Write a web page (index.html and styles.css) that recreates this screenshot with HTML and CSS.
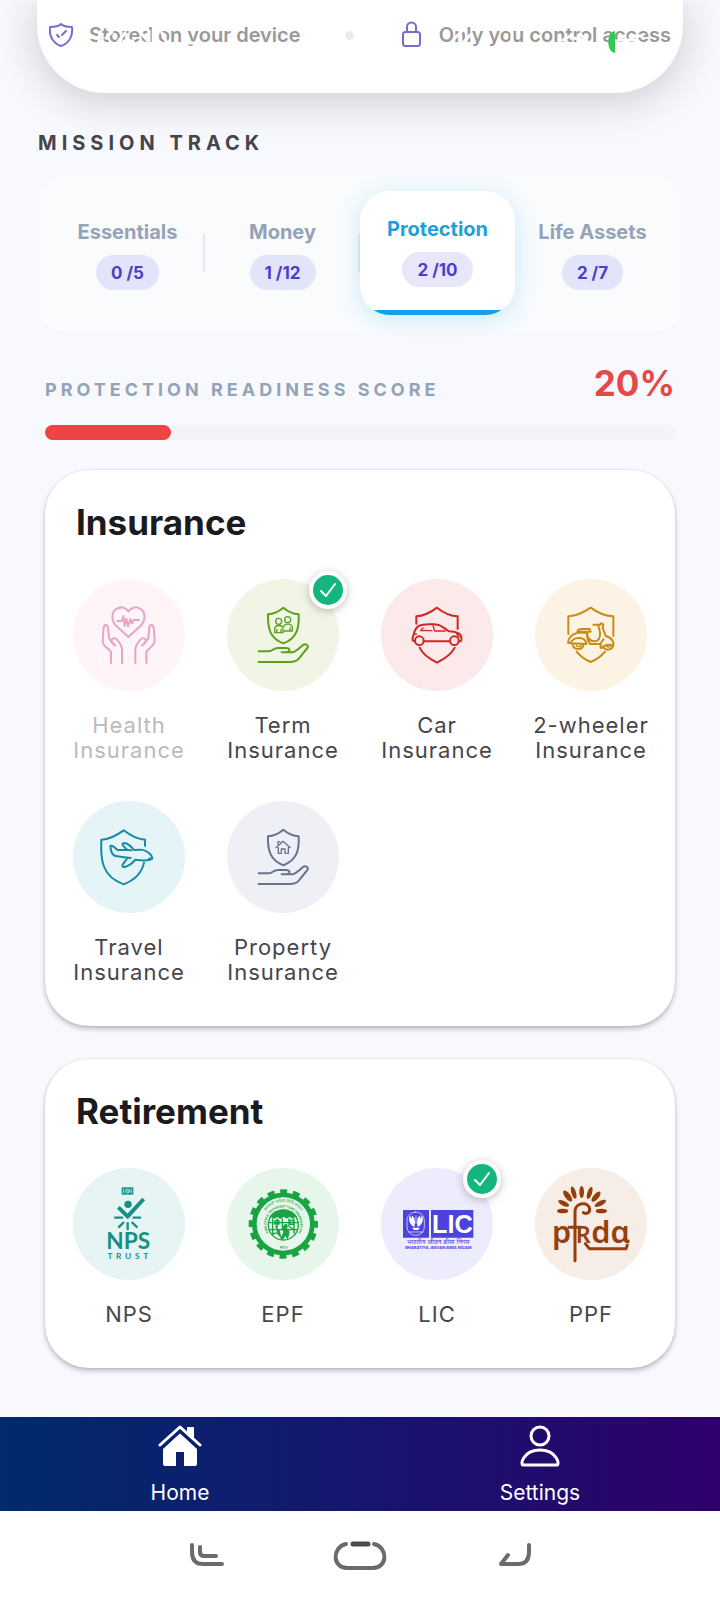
FILE: index.html
```html
<!DOCTYPE html>
<html lang="en">
<head>
    <meta charset="UTF-8">
    <meta name="viewport" content="width=device-width, initial-scale=1.0">
    <title>Mission Track</title>
    <link rel="stylesheet" href="styles.css">
</head>
<body>
    <header class="trust-card">
        <div class="trust-item">
            <svg class="trust-icon" viewBox="0 0 26 28" aria-hidden="true">
                <path d="M12 3 C9 6 5 6 1 6 C0 14 3 22 12 25 C21 22 24 14 23 6 C19 6 15 6 12 3 Z"/>
                <path d="M8 14 l2 2 M13 14 l4 -4"/>
            </svg>
            <span>Stored on your device</span>
        </div>
        <span class="trust-dot"></span>
        <div class="trust-item">
            <svg class="trust-icon" viewBox="0 0 26 28" aria-hidden="true">
                <rect x="4" y="11" width="17" height="14" rx="2.5"/>
                <path d="M8 11 V6 a4.5 4.5 0 0 1 9 0 V11"/>
            </svg>
            <span>Only you control access</span>
        </div>
        <!-- status bar glyphs, white over the card -->
        <svg class="status-bar" viewBox="0 0 720 60" aria-hidden="true">
            <path class="status-white" d="M88 37 l9 1 M100 32 l-1 9 M106 38 l6 -6 M117 43 l8 -10 M124 41 l9 0 M141 33 l6 7 M149 31 v12 M162 33 l4 8 M190 43 l8 0 M455 38 l7 -7 M463 43 l7 -8 M512 33 v10 M563 40 l9 -5 M574 38 l11 3 M580 34 l7 7 M618 40 h18 M630 36 h12"/>
            <path class="status-green" d="M615 31 V53 C606 52 606 32 615 31 Z"/>
        </svg>
    </header>

    <main class="content">
        <h2 class="section-label">MISSION TRACK</h2>

        <div class="tabs" role="tablist">
            <button class="tab" role="tab">Essentials<span class="pill">0 /5</span></button>
            <button class="tab" role="tab">Money<span class="pill">1 /12</span></button>
            <button class="tab active" role="tab" aria-selected="true">Protection<span class="pill">2 /10</span></button>
            <button class="tab" role="tab">Life Assets<span class="pill">2 /7</span></button>
        </div>

        <div class="score">
            <div class="score-head">
                <span class="score-label">PROTECTION READINESS SCORE</span>
                <span class="score-value">20%</span>
            </div>
            <div class="bar"><div class="bar-fill" style="width: 20%"></div></div>
        </div>

        <section class="card">
            <h3>Insurance</h3>
            <div class="grid">
                <button class="item disabled">
                    <span class="circle pink">
                        <svg viewBox="41 57 336 336" aria-hidden="true">
                            <path d="M207 231 L168 195 C155 180 157 158 169 148 C184 137 200 143 207 154 C215 142 232 137 247 149 C258 160 259 180 246 195 Z"/>
                            <path d="M174 183 H187 L192 168 L196 198 L201 176 L206 199 L213 177 L218 190 L223 180 H239"/>
                            <path d="M155 309 V275 L134 255 C130 250 130 245 130 240 L133 203 C134 192 145 192 146 203 L149 235 L162 253"/>
                            <path d="M188 309 V270 C188 258 181 248 173 239 C166 231 154 235 157 245 L168 257"/>
                            <path d="M261 309 V275 L281 255 C285 250 286 245 286 240 L283 203 C282 192 271 192 270 203 L267 235 L253 253"/>
                            <path d="M228 309 V270 C228 258 235 248 243 239 C250 231 262 235 259 245 L248 257"/>
                        </svg>
                    </span>
                    <span class="item-name">Health Insurance</span>
                </button>
                <button class="item">
                    <span class="circle green">
                        <svg viewBox="502 57 336 336" aria-hidden="true">
                            <path d="M671 143 C657 155 642 162 625 163 C624 204 630 235 671 250 C712 235 719 204 717 163 C700 162 685 155 671 143 Z"/>
                            <g class="thin">
                                <circle cx="657" cy="184" r="9"/>
                                <circle cx="684" cy="179" r="9"/>
                                <path d="M645 218 V207 C646 193 669 193 670 207 V218 Z M651 217 V208 M664 217 V208"/>
                                <path d="M672 199 C677 189 697 190 698 203 V213 H672 M691 212 V204"/>
                            </g>
                            <path d="M597 274 H628 C639 273 641 264 655 264 H678 C693 264 693 277 680 277 H666 M680 277 H700 C711 273 720 264 730 255 C738 249 748 256 743 264 L718 295 C711 304 702 306 690 306 H597"/>
                        </svg>
                        <span class="check"><svg viewBox="0 0 30 30" aria-hidden="true"><path d="M8 16 L13 21 L22 9"/></svg></span>
                    </span>
                    <span class="item-name">Term Insurance</span>
                </button>
                <button class="item">
                    <span class="circle red">
                        <svg viewBox="65 57 336 336" aria-hidden="true">
                            <path d="M171 191 V169 C194 168 216 156 233 143 C251 157 272 168 295 169 V207"/>
                            <path d="M181 263 C190 284 211 297 233 308 C255 297 276 284 286 263"/>
                            <path d="M165 243 C157 243 159 234 163 224 C164 214 172 197 186 195 C205 191 238 191 248 200 L269 214 C288 215 306 220 306 234 C308 244 304 244 299 244 M193 244 H270"/>
                            <circle cx="180" cy="242" r="13"/>
                            <circle cx="285" cy="242" r="13"/>
                            <path class="thin" d="M184 212 H218 M184 212 L191 204 M221 197 L226 213 H258 M292 222 L299 231 M165 222 H171"/>
                        </svg>
                    </span>
                    <span class="item-name">Car Insurance</span>
                </button>
                <button class="item">
                    <span class="circle amber">
                        <svg viewBox="525 57 336 336" aria-hidden="true">
                            <path d="M625 222 V169 C649 168 672 157 692 143 C712 158 734 168 760 169 V228"/>
                            <path d="M650 275 C660 288 675 299 692 306 C710 299 724 288 735 275"/>
                            <path d="M652 215 C654 206 660 207 669 207 H689 L692 215 Z"/>
                            <path d="M653 218 C635 221 624 237 624 249 H634 M652 218 H681 C682 237 690 244 704 244 C717 243 721 232 720 217 L715 198 L724 190 L730 194 L728 204 L737 228 C757 233 763 247 759 255 C751 254 735 251 725 264 C721 267 718 250 731 238 M700 194 H715 M680 219 L683 239 L690 252 H722"/>
                            <path d="M632 250 C637 230 676 227 679 252 Z"/>
                            <path d="M638 252 C640 272 668 272 671 252 M730 263 C739 273 755 271 760 256"/>
                            <path class="thin" d="M648 254 C650 262 661 262 663 254 M739 259 C744 264 751 260 752 256"/>
                        </svg>
                    </span>
                    <span class="item-name">2-wheeler Insurance</span>
                </button>
                <button class="item">
                    <span class="circle teal">
                        <svg viewBox="41 63 336 336" aria-hidden="true">
                            <path d="M257 198 V179 C231 178 211 165 193 151 C174 165 152 178 126 179 C123 241 128 289 193 313 C232 298 248 277 254 248"/>
                            <path d="M156 197 C152 196 153 202 155 210 C157 224 164 228 173 229 L205 233 L190 254 C187 260 191 262 198 260 C209 257 222 247 228 239 C247 242 262 242 273 239 C281 236 279 229 272 222 C257 207 244 208 224 210 C217 202 209 190 195 189 C189 189 188 194 191 197 L204 210 H175 C169 207 165 198 156 197 Z"/>
                            <path d="M204 210 L216 211 M205 233 L214 234 M269 236 H279"/>
                        </svg>
                    </span>
                    <span class="item-name">Travel Insurance</span>
                </button>
                <button class="item">
                    <span class="circle slate">
                        <svg viewBox="502 63 336 336" aria-hidden="true">
                            <path d="M671 149 C657 161 642 168 625 169 C624 210 630 240 671 256 C712 240 719 210 717 169 C700 168 685 161 671 149 Z"/>
                            <path class="thin" d="M649 203 L670 184 L692 203 M655 193 V185 H661 M656 203 V220 H665 V207 H676 V220 H686 V203"/>
                            <path d="M597 280 H628 C639 279 641 270 655 270 H678 C693 270 693 283 680 283 H666 M680 283 H700 C711 279 720 270 730 261 C738 255 748 262 743 270 L718 301 C711 310 702 312 690 312 H597"/>
                        </svg>
                    </span>
                    <span class="item-name">Property Insurance</span>
                </button>
            </div>
        </section>

        <section class="card">
            <h3>Retirement</h3>
            <div class="grid">
                <button class="item">
                    <span class="circle nps">
                        <svg viewBox="41 54 336 336" aria-hidden="true">
                            <rect class="fill" x="187" y="112" width="35" height="22"/>
                            <path class="hole" d="M193 117 V129 M216 117 V129 M202 123 H208"/>
                            <circle class="hole" cx="205" cy="123" r="6"/>
                            <circle class="fill" cx="206" cy="163" r="11"/>
                            <path class="thick" d="M177 172 L205 199 L253 147"/>
                            <path class="rays" d="M165 203 H191 M220 203 H245 M177 233 L194 216 M234 233 L217 216 M205 217 V240"/>
                            <text class="nps-name" x="207" y="298">NPS</text>
                            <text class="nps-trust" x="211" y="327">TRUST</text>
                        </svg>
                    </span>
                    <span class="item-name">NPS</span>
                </button>
                <button class="item">
                    <span class="circle epf">
                        <svg viewBox="502 54 336 336" aria-hidden="true">
                            <circle class="gear" cx="671" cy="222" r="87"/>
                            <circle class="teeth" cx="671" cy="222" r="98" pathLength="320"/>
                            <path id="epfTop" class="none" d="M605 222 A66 66 0 0 1 737 222"/>
                            <path id="epfInner" class="none" d="M637 261 A51 51 0 1 1 705 261"/>
                            <text class="ring-hi"><textPath href="#epfTop" startOffset="50%">कर्मचारी भविष्य निधि संगठन</textPath></text>
                            <text class="ring-en"><textPath href="#epfInner" startOffset="50%">EMPLOYEES' PROVIDENT FUND ORGANISATION</textPath></text>
                            <circle class="thin" cx="671" cy="225" r="45"/>
                            <path class="fill" d="M628 205 C640 171 702 171 714 205 L706 201 L698 207 L690 200 L681 206 L673 200 L662 207 L653 201 L643 207 L636 202 Z"/>
                            <path class="thin" d="M628 218 H714 M630 239 H712 M639 207 V252 M653 207 V230 M668 207 V240 M688 207 V230 M703 207 V250 M640 253 C650 245 660 251 664 262 M648 229 l8 12 M690 231 l15 9 M646 212 h12 v10 h-12 z M691 211 h10 v12 h-10 z"/>
                            <path class="fill" d="M676 222 C684 220 687 229 682 233 L690 246 L684 270 L678 258 L669 269 L661 269 L671 247 L668 232 Z M652 235 l8 4 l4 20 h-6 l-7 -14 z"/>
                            <text class="ring-hi" x="671" y="296">भारत</text>
                        </svg>
                    </span>
                    <span class="item-name">EPF</span>
                </button>
                <button class="item">
                    <span class="circle lic">
                        <svg viewBox="36 54 336 336" aria-hidden="true">
                            <path class="fill" d="M102 180 H180 V263 H102 Z M186 180 H313 V263 H186 Z"/>
                            <rect class="hole" x="114" y="186" width="52" height="70" rx="25"/>
                            <path class="white" d="M136 231 C121 223 117 207 123 197 L129 207 L128 196 L136 204 L138 217 Z M146 231 C161 223 165 207 159 197 L153 207 L154 196 L146 204 L144 217 Z M129 233 H153 L147 240 H135 Z"/>
                            <path class="hole" d="M141 198 V220 M120 246 H162"/>
                            <text class="lic-name" x="250" y="249">LIC</text>
                            <text class="lic-hi" x="208" y="281">भारतीय जीवन बीमा निगम</text>
                            <text class="lic-en" x="208" y="298">BHARATIYA JEEVAN BIMA NIGAM</text>
                        </svg>
                        <span class="check"><svg viewBox="0 0 30 30" aria-hidden="true"><path d="M8 16 L13 21 L22 9"/></svg></span>
                    </span>
                    <span class="item-name">LIC</span>
                </button>
                <button class="item">
                    <span class="circle ppf">
                        <svg viewBox="494 54 336 336" aria-hidden="true">
                            <g class="fill">
                                <ellipse cx="577" cy="183" rx="17" ry="7"/>
                                <ellipse cx="580" cy="160" rx="18" ry="7" transform="rotate(27 580 160)"/>
                                <ellipse cx="592" cy="138" rx="20" ry="8" transform="rotate(52 592 138)"/>
                                <ellipse cx="610" cy="128" rx="19" ry="7" transform="rotate(73 610 128)"/>
                                <ellipse cx="634" cy="126" rx="18" ry="7" transform="rotate(90 634 126)"/>
                                <ellipse cx="658" cy="129" rx="19" ry="7" transform="rotate(108 658 129)"/>
                                <ellipse cx="677" cy="140" rx="19" ry="8" transform="rotate(130 677 140)"/>
                                <ellipse cx="690" cy="160" rx="19" ry="7" transform="rotate(153 690 160)"/>
                                <ellipse cx="693" cy="183" rx="17" ry="7"/>
                            </g>
                            <path class="stem" d="M614 332 V184 C614 157 654 153 658 177 C659 189 648 193 639 188 M596 232 H632 M645 281 L657 296 H767 L771 285"/>
                            <text class="prda" x="545" y="280">p</text>
                            <text class="prda prda-r" x="616" y="280">R</text>
                            <text class="prda" x="663" y="280">dɑ</text>
                        </svg>
                    </span>
                    <span class="item-name">PPF</span>
                </button>
            </div>
        </section>
    </main>

    <nav class="bottom-nav">
        <a href="#home">
            <svg viewBox="0 0 44 42" aria-hidden="true">
                <path class="solid" d="M22 8 L39 24 V39 a2 2 0 0 1 -2 2 H26 V27 H18 V41 H7 a2 2 0 0 1 -2 -2 V24 Z M29 3 a1 1 0 0 1 1 -1 H35 a1 1 0 0 1 1 1 V15 L29 9 Z"/>
                <path class="gap" d="M5 22 L22 7 L39 22"/>
                <path class="roof" d="M2 20 L22 2 L42 20"/>
            </svg>
            Home
        </a>
        <a href="#settings">
            <svg viewBox="0 0 44 42" aria-hidden="true">
                <circle class="line" cx="22" cy="11" r="9"/>
                <path class="line" d="M5 40 C2 40 5 25 22 25 C39 25 42 40 39 40 Z"/>
            </svg>
            Settings
        </a>
    </nav>

    <footer class="system-bar">
        <button aria-label="Recents">
            <svg viewBox="0 0 54 30"><path d="M13 4 V11 Q13 23 24 23 H43 M21 6 V11 Q21 15 25 15 H37"/></svg>
        </button>
        <button aria-label="Home screen">
            <svg viewBox="0 0 54 30"><path d="M13 3 C-1 6 -1 27 14 27 H40 C55 27 55 6 41 3"/><path class="dark" d="M20 3 H35"/></svg>
        </button>
        <button aria-label="Back">
            <svg viewBox="0 0 54 30"><path d="M42 4 V11 Q42 23 31 23 H14 L21 14"/></svg>
        </button>
    </footer>
</body>
</html>
```

FILE: styles.css
```css
* {
    box-sizing: border-box;
}
body {
    margin: 0;
    min-height: 100vh;
    display: flex;
    flex-direction: column;
    background: #f8f9fe;
    font-family: Inter, "Noto Sans", sans-serif;
    color: #45464d;
}
button {
    font: inherit;
    color: inherit;
    background: none;
    border: none;
    padding: 0;
    cursor: pointer;
}
svg {
    fill: none;
    stroke-linecap: round;
    stroke-linejoin: round;
}

/* top card */
.trust-card {
    position: relative;
    margin: 0 37px;
    padding: 21px 12px 44px;
    display: flex;
    align-items: center;
    justify-content: space-between;
    background: #fff;
    border-radius: 0 0 68px 68px;
    box-shadow: 0 6px 44px rgba(30, 30, 40, 0.22);
    font-size: 20px;
    line-height: 28px;
    font-weight: 600;
    color: #999;
    white-space: nowrap;
}
.trust-item {
    display: flex;
    align-items: center;
    gap: 14px;
}
.trust-icon {
    width: 26px;
    height: 28px;
    stroke: #736fd0;
    stroke-width: 2;
}
.trust-dot {
    width: 9px;
    height: 9px;
    border-radius: 50%;
    background: #ececec;
}
.status-bar {
    position: absolute;
    top: 0;
    left: -37px;
    right: -37px;
    width: 100vw;
}
.status-white {
    stroke: #fff;
    stroke-width: 3;
}
.status-green {
    fill: #34c759;
}

.content {
    flex: 1;
    padding: 0 45px;
}
.section-label {
    margin: 36px -7px 18px;
    font-size: 20px;
    line-height: 28px;
    font-weight: 700;
    letter-spacing: 5px;
}

/* tabs */
.tabs {
    display: grid;
    grid-template-columns: repeat(4, 1fr);
    margin: 0 -8px;
    padding: 16px 13px;
    border-radius: 28px;
    background: #f9fbfd;
}
.tab {
    position: relative;
    height: 124px;
    display: flex;
    flex-direction: column;
    align-items: center;
    justify-content: center;
    gap: 11px;
    padding-top: 3px;
    font-size: 20px;
    line-height: 24px;
    font-weight: 700;
    color: #94a3b8;
}
.tab:not(:last-child)::after {
    content: "";
    position: absolute;
    right: 0;
    top: 43px;
    width: 2px;
    height: 38px;
    background: #e5e8f0;
}
.tab.active {
    z-index: 1;
    padding: 0 0 3px;
    color: #1f9fda;
    background: linear-gradient(to top, #14a0e4 5px, #fff 5px);
    border-radius: 30px;
    box-shadow: 0 4px 24px rgba(14, 165, 233, 0.2);
}
.tab.active::after {
    display: none;
}
.pill {
    padding: 6px 15px 5px;
    border-radius: 18px;
    background: #e2e4f9;
    color: #4f3ccb;
    font-size: 17px;
    font-weight: 700;
}
.tab.active .pill {
    background: #e8e7fa;
}

/* score */
.score {
    margin: 30px 0;
}
.score-head {
    display: flex;
    align-items: baseline;
    justify-content: space-between;
    margin-bottom: 20px;
}
.score-label {
    font-size: 18px;
    font-weight: 700;
    letter-spacing: 4px;
    color: #94a3b8;
}
.score-value {
    font-size: 35px;
    line-height: 44px;
    font-weight: 700;
    color: #e54848;
}
.bar {
    height: 15px;
    border-radius: 8px;
    background: #f3f4fa;
}
.bar-fill {
    height: 100%;
    border-radius: 8px;
    background: #ef4444;
}

/* cards */
.card {
    margin-bottom: 33px;
    padding: 30px 7px 41px;
    background: #fff;
    border-radius: 44px;
    box-shadow: 0 3px 5px rgba(0, 0, 0, 0.24), 0 0 2px rgba(0, 0, 0, 0.12);
}
.card h3 {
    margin: 0 24px 35px;
    font-size: 35px;
    line-height: 44px;
    font-weight: 700;
    color: #1b1b1f;
}
.grid {
    display: grid;
    grid-template-columns: repeat(4, 1fr);
    row-gap: 38px;
}
.item {
    display: flex;
    flex-direction: column;
    align-items: center;
    justify-content: flex-start;
    gap: 22px;
}
.item-name {
    max-width: 130px;
    font-size: 22px;
    line-height: 25px;
    letter-spacing: 1px;
}
.circle {
    position: relative;
    width: 112px;
    height: 112px;
    border-radius: 50%;
}
.circle > svg {
    display: block;
    width: 100%;
    height: 100%;
    stroke: currentColor;
    stroke-width: 6;
}
.circle .thin { stroke-width: 4; }
.circle .thick { stroke-width: 12; stroke-linecap: butt; stroke-linejoin: miter; }
.circle .rays { stroke-width: 7; stroke-linecap: butt; }
.circle .fill { fill: currentColor; stroke: none; }
.circle .white { fill: #fff; stroke: none; }
.circle .hole { stroke: #fff; stroke-width: 2; }
.circle .none { stroke: none; }
.circle text {
    fill: currentColor;
    stroke: none;
    text-anchor: middle;
}
.disabled { color: #b9babd; }
.pink { background: #fff5f9; color: #e6a5c8; }
.green { background: #f0f5e5; color: #5fa01c; }
.red { background: #fce9ea; color: #cf2626; }
.amber { background: #fcf3e5; color: #ca8c17; }
.teal { background: #e5f4f6; color: #178aa8; }
.slate { background: #eff0f5; color: #66758c; }
.nps { background: #e6f4f4; color: #149184; }
.epf { background: #e7f6ea; color: #19a443; }
.lic { background: #edecfd; color: #4c42dc; }
.ppf { background: #f6ede6; color: #963f0d; }

/* logos */
.nps-name { font-family: Lato, sans-serif; font-size: 68px; font-weight: 700; }
.nps-trust { font-family: Lato, sans-serif; font-size: 25px; font-weight: 700; letter-spacing: 11px; }
.circle .gear { stroke-width: 14; }
.circle .teeth {
    stroke-width: 12;
    stroke-linecap: butt;
    stroke-dasharray: 11 9;
    stroke-dashoffset: 5;
}
.ring-hi { font-size: 12px; }
.ring-en { font-size: 9px; font-weight: 700; }
.circle .lic-name {
    fill: #fff;
    font-family: "Liberation Sans Narrow", "Liberation Sans", sans-serif;
    font-size: 76px;
    font-weight: 700;
}
.lic-hi { font-size: 20px; font-weight: 400; }
.lic-en { font-size: 12px; font-weight: 700; }
.circle .stem { stroke-width: 9; }
.circle .prda {
    font-family: "Noto Sans", sans-serif;
    font-size: 92px;
    font-weight: 600;
    text-anchor: start;
}
.circle .prda-r { font-size: 70px; }

.check {
    position: absolute;
    top: -8px;
    right: -8px;
    width: 38px;
    height: 38px;
    border: 4px solid #fff;
    border-radius: 50%;
    background: #14b67f;
    box-shadow: 0 2px 8px rgba(0, 0, 0, 0.25);
}
.check svg {
    display: block;
    stroke: #fff;
    stroke-width: 2;
}

/* bottom navigation */
.bottom-nav {
    display: flex;
    height: 94px;
    background: linear-gradient(90deg, #002b6c, #16166e 50%, #2e006b);
}
.bottom-nav a {
    flex: 1;
    display: flex;
    flex-direction: column;
    align-items: center;
    padding-top: 8px;
    gap: 13px;
    color: #fff;
    font-size: 21px;
    line-height: 26px;
    text-decoration: none;
}
.bottom-nav svg {
    width: 44px;
    height: 42px;
    flex: none;
}
.solid { fill: #fff; }
.gap { stroke: #0b206d; stroke-width: 2; }
.roof { stroke: #fff; stroke-width: 3; }
.line { stroke: #fff; stroke-width: 3; }

.system-bar {
    height: 89px;
    display: flex;
    align-items: center;
    justify-content: center;
    gap: 100px;
    background: #fff;
}
.system-bar svg {
    display: block;
    width: 54px;
    height: 30px;
    stroke: #6b6b6b;
    stroke-width: 4;
}
.system-bar .dark {
    stroke: #4c4c4c;
    stroke-width: 5;
}
```
